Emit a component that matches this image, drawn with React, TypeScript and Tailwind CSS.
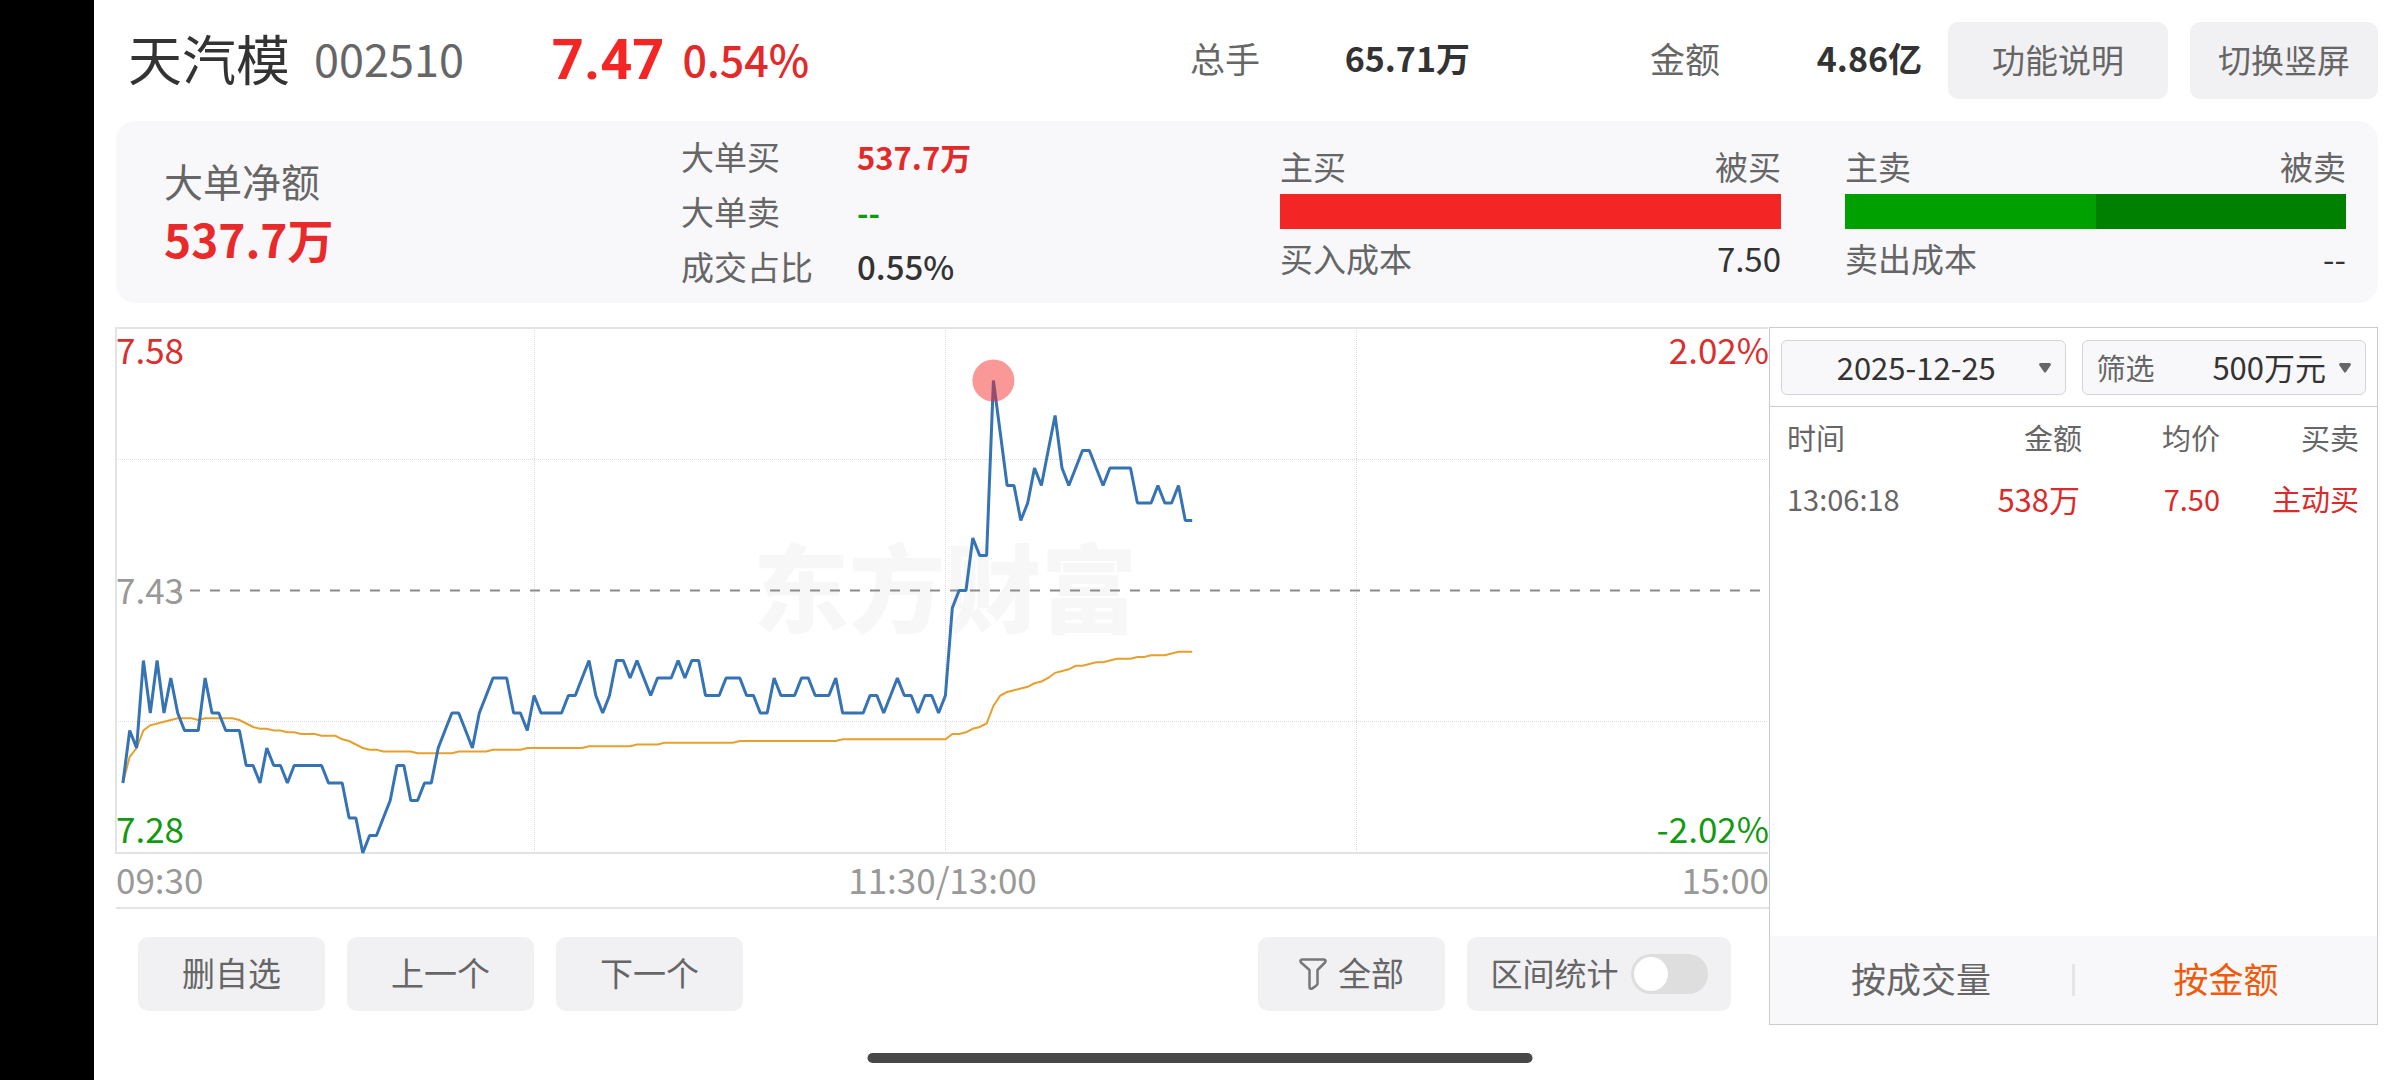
import { useState } from "react";
import clsx from "clsx";

// one value per minute, in cents above the 7.28 low
const prices = [
  4, 7, 6, 11, 8, 11, 8, 10, 8, 7, 7, 7, 10, 8, 8, 7, 7, 7, 5, 5, 4, 6, 5, 5, 4,
  5, 5, 5, 5, 5, 4, 4, 4, 2, 2, 0, 1, 1, 2, 3, 5, 5, 3, 3, 4, 4, 6, 7, 8, 8, 7,
  6, 8, 9, 10, 10, 10, 8, 8, 7, 9, 8, 8, 8, 8, 9, 9, 10, 11, 9, 8, 9, 11, 11,
  10, 11, 10, 9, 10, 10, 10, 11, 10, 11, 11, 9, 9, 9, 10, 10, 10, 9, 9, 8, 8,
  10, 9, 9, 9, 10, 10, 9, 9, 9, 10, 8, 8, 8, 8, 9, 9, 8, 9, 10, 9, 9, 8, 9, 9,
  8, 9, 14, 15, 15, 18, 17, 17, 27, 24, 21, 21, 19, 20, 22, 21, 23, 25, 22, 21,
  22, 23, 23, 22, 21, 22, 22, 22, 22, 20, 20, 20, 21, 20, 20, 21, 19, 19,
];

// [minute, cents above low], only where the slope changes
const average = [
  [0, 4], [1, 5.5], [2, 6], [3, 7], [4, 7.3], [6, 7.5], [8, 7.7], [10, 7.7],
  [11, 7.6], [12, 7.7], [16, 7.7], [17, 7.6], [18, 7.4], [19, 7.2], [20, 7.1],
  [21, 7.1], [22, 7], [23, 7], [24, 6.9], [25, 6.9], [26, 6.8], [28, 6.8],
  [29, 6.7], [31, 6.7], [32, 6.5], [33, 6.4], [34, 6.2], [35, 6], [36, 5.9],
  [37, 5.9], [38, 5.8], [42, 5.8], [43, 5.7], [48, 5.7], [49, 5.8], [53, 5.8],
  [54, 5.9], [58, 5.9], [59, 6], [67, 6], [68, 6.1], [74, 6.1], [75, 6.2],
  [78, 6.2], [79, 6.3], [89, 6.3], [90, 6.4], [104, 6.4], [105, 6.5],
  [120, 6.5], [121, 6.8], [122, 6.8], [123, 6.9], [124, 7.1], [125, 7.2],
  [126, 7.4], [127, 8.4], [128, 9], [129, 9.2], [131, 9.4], [132, 9.5],
  [133, 9.7], [134, 9.8], [135, 10], [136, 10.3], [138, 10.5], [139, 10.7],
  [140, 10.7], [142, 10.9], [143, 10.9], [145, 11.1], [147, 11.1], [148, 11.2],
  [149, 11.2], [150, 11.3], [152, 11.3], [154, 11.5], [156, 11.5],
];

const WIDTH = 1652;
const HEIGHT = 525;
const px = (minute: number) => ((minute + 1) * WIDTH) / 241;
const py = (cents: number) => 1 + HEIGHT - (cents * HEIGHT) / 30;
const toPoints = (list: number[][]) =>
  list.map(([m, c]) => `${px(m).toFixed(1)},${py(c).toFixed(1)}`).join(" ");

const Chart = () => (
  <svg viewBox="0 0 1652 527" className="block w-full h-auto overflow-visible">
    <text
      x="829"
      y="298"
      textAnchor="middle"
      fontSize="96"
      fontWeight="900"
      fill="#f7f7f7"
    >
      东方财富
    </text>
    <g stroke="#dcdcdc" strokeWidth="1" strokeDasharray="1 1">
      <path d="M0 132.5H1652M0 394.5H1652" />
      <path d="M418.5 1V526M829.5 1V526M1240.5 1V526" />
    </g>
    <path d="M1652 1H0V526H1652" fill="none" stroke="#e3e3e5" strokeWidth="2" />
    <path
      d="M62 263.5H1652"
      stroke="#8c8c8c"
      strokeWidth="2"
      strokeDasharray="10 10"
      strokeDashoffset="8"
    />
    <polyline
      points={toPoints(average)}
      fill="none"
      stroke="#e6a02d"
      strokeWidth="2"
    />
    <polyline
      points={toPoints(prices.map((c, m) => [m, c]))}
      fill="none"
      stroke="#3673b5"
      strokeWidth="3"
      strokeLinejoin="bevel"
    />
    <circle cx={px(127)} cy={py(27)} r="21" fill="#f42525" fillOpacity="0.48" />
  </svg>
);

const GrayButton = ({
  children,
  className,
}: {
  children: React.ReactNode;
  className?: string;
}) => (
  <button
    type="button"
    className={clsx(
      "flex items-center justify-center rounded-[10px] bg-[#f1f1f3] pb-1 text-[33px] leading-10 text-[#666]",
      className
    )}
  >
    {children}
  </button>
);

const CostBar = ({
  labels,
  colors,
  cost,
  value,
}: {
  labels: string[];
  colors: string[];
  cost: string;
  value: string;
}) => (
  <div className="w-[501px] text-[33px] leading-10 text-[#666]">
    <div className="flex justify-between">
      <span>{labels[0]}</span>
      <span>{labels[1]}</span>
    </div>
    <div className="mt-2 mb-[9px] flex h-[35px]">
      {colors.map((color, i) => (
        <div key={i} className={clsx("flex-1", color)} />
      ))}
    </div>
    <div className="flex justify-between">
      <span>{cost}</span>
      <span className="text-[#333]">{value}</span>
    </div>
  </div>
);

const Caret = () => (
  <svg viewBox="0 0 12 10" className="h-[10px] w-3 shrink-0" fill="#666">
    <path d="M1 0H11Q12.500 1 11.500 2.500L7 9Q6 10.500 5 9L.5 2.500Q-.5 1 1 0Z" />
  </svg>
);

const App = () => {
  const [range, setRange] = useState(false);
  const [tab, setTab] = useState("amount");

  return (
    <div className="relative flex min-h-screen bg-white font-['Noto_Sans_CJK_SC',sans-serif] text-[#333]">
      <div className="w-[94px] shrink-0 bg-black" />

      <main className="min-w-0 flex-1 px-[22px] pt-[22px]">
        <header className="flex h-[77px] items-start leading-[72px]">
          <h1 className="ml-3 text-[54px]">天汽模</h1>
          <span className="ml-6 text-[45px] text-[#666]">002510</span>
          <span className="ml-[88px] font-[Roboto,sans-serif] text-[56px] leading-[77px] font-bold text-[#f42525]">
            7.47
          </span>
          <span className="ml-[18px] text-[43px] font-medium text-[#e32a2a]">
            0.54%
          </span>
          <div className="ml-auto flex gap-[180px] text-[35px]">
            <div className="flex w-[280px] justify-between">
              <span className="text-[#666]">总手</span>
              <span className="text-[34px] font-bold">65.71万</span>
            </div>
            <div className="flex w-[272px] justify-between">
              <span className="text-[#666]">金额</span>
              <span className="text-[34px] font-bold">4.86亿</span>
            </div>
          </div>
          <GrayButton className="ml-[26px] h-[77px] w-[220px]">功能说明</GrayButton>
          <GrayButton className="ml-[22px] h-[77px] w-[188px]">切换竖屏</GrayButton>
        </header>

        <section className="mt-[22px] flex items-center rounded-[20px] bg-[#f8f8fb] pt-2 pr-8 pb-[9px] pl-12">
          <div className="w-[517px] pb-1">
            <div className="text-[39px] leading-[56px] text-[#666]">大单净额</div>
            <div className="text-[46px] leading-[60px] font-bold text-[#e92a2a]">
              537.7万
            </div>
          </div>
          <dl className="grid grid-cols-[176px_auto] text-[33px] leading-[55px] text-[#666]">
            <dt>大单买</dt>
            <dd className="text-[31px] font-bold text-[#e32a2a]">537.7万</dd>
            <dt>大单卖</dt>
            <dd className="text-[31px] font-bold text-[#0a9d0a]">--</dd>
            <dt>成交占比</dt>
            <dd className="text-[33px] font-medium text-[#333]">0.55%</dd>
          </dl>
          <div className="ml-auto flex gap-16">
            <CostBar
              labels={["主买", "被买"]}
              colors={["bg-[#f42525]"]}
              cost="买入成本"
              value="7.50"
            />
            <CostBar
              labels={["主卖", "被卖"]}
              colors={["bg-[#00a000]", "bg-[#008000]"]}
              cost="卖出成本"
              value="--"
            />
          </div>
        </section>

        <div className="mt-6 flex">
          <section className="min-w-0 flex-1 pb-[14px]">
            <div className="relative pr-px text-[35px] leading-10">
              <Chart />
              <span className="absolute top-0.5 left-0 text-[#d9302f]">7.58</span>
              <span className="absolute inset-y-0 left-0 flex items-center pb-1 text-[#999]">
                7.43
              </span>
              <span className="absolute bottom-1.5 left-0 text-[#129a12]">7.28</span>
              <span className="absolute top-0.5 right-0 text-[#d9302f]">2.02%</span>
              <span className="absolute right-0 bottom-1.5 text-[#129a12]">
                -2.02%
              </span>
            </div>
            <div className="grid grid-cols-3 border-b-2 border-[#e3e3e5] pb-[3px] text-[35px] leading-[50px] text-[#999]">
              <span>09:30</span>
              <span className="text-center">11:30/13:00</span>
              <span className="text-right">15:00</span>
            </div>

            <div className="mt-7 flex gap-[22px] pr-[38px] pl-[22px]">
              <GrayButton className="h-[74px] w-[187px]">删自选</GrayButton>
              <GrayButton className="h-[74px] w-[187px]">上一个</GrayButton>
              <GrayButton className="h-[74px] w-[187px]">下一个</GrayButton>
              <GrayButton className="ml-auto h-[74px] w-[187px] gap-[11px]">
                <svg
                  viewBox="0 0 28 32"
                  className="mt-1 h-8 w-7"
                  fill="none"
                  stroke="#777"
                  strokeWidth="2.5"
                  strokeLinejoin="round"
                >
                  <path d="M3 1.500H25Q27.500 2 26 4.500L18.500 12V26Q18 27.500 12.500 31Q10.500 31 10.500 29V12L2 4.500Q.5 2 3 1.500Z" />
                </svg>
                全部
              </GrayButton>
              <label className="flex h-[74px] w-[264px] items-center justify-center gap-3 rounded-[10px] bg-[#f1f1f3] text-[32px] leading-10 text-[#666]">
                <span className="pb-1">区间统计</span>
                <input
                  type="checkbox"
                  role="switch"
                  checked={range}
                  onChange={(e) => setRange(e.target.checked)}
                  className="flex h-10 w-[77px] appearance-none items-center rounded-full bg-[#dedede] px-[3px] before:size-[34px] before:rounded-full before:bg-white checked:justify-end checked:bg-[#f05a0a]"
                />
              </label>
            </div>
          </section>

          <aside className="flex w-[609px] shrink-0 flex-col border border-[#ccc]">
            <div className="grid grid-cols-2 gap-4 border-b border-[#ccc] px-[11px] pt-3 pb-[11px] text-[31px]">
              <div className="flex h-[55px] items-center rounded-md border border-[#d5d5d9] bg-[#f8f8fb] pr-[14px]">
                <select
                  aria-label="日期"
                  className="min-w-0 flex-1 appearance-none pb-0.5 pl-3 text-center leading-10"
                >
                  <option>2025-12-25</option>
                </select>
                <Caret />
              </div>
              <label className="flex h-[55px] items-center rounded-md border border-[#d5d5d9] bg-[#f8f8fb] pr-[14px] pl-[14px] leading-10">
                <span className="pb-0.5 text-[29px] text-[#666]">筛选</span>
                <select className="min-w-0 flex-1 appearance-none pr-[13px] pb-0.5 text-right leading-10 [text-align-last:right]">
                  <option>500万元</option>
                </select>
                <Caret />
              </label>
            </div>

            <table className="w-full table-fixed text-right text-[29px] leading-[61px]">
              <colgroup>
                <col className="w-[150px]" />
                <col className="w-[162px]" />
                <col className="w-[138px]" />
                <col />
              </colgroup>
              <thead className="text-[#666]">
                <tr>
                  <th className="pl-[17px] text-left font-normal">时间</th>
                  <th className="font-normal">金额</th>
                  <th className="font-normal">均价</th>
                  <th className="pr-[18px] font-normal">买卖</th>
                </tr>
              </thead>
              <tbody className="text-[#dc2a2a]">
                <tr>
                  <td className="pl-[17px] text-left text-[#666]">13:06:18</td>
                  <td className="pr-0.5 text-[31px]">538万</td>
                  <td>7.50</td>
                  <td className="pr-[18px]">主动买</td>
                </tr>
              </tbody>
            </table>

            <div className="mt-auto flex h-[88px] items-center bg-[#f8f8fb] text-[35px] leading-10">
              <button
                type="button"
                onClick={() => setTab("volume")}
                className={clsx(
                  "flex-1 pb-1",
                  tab === "volume" ? "text-[#f05a0a]" : "text-[#666]"
                )}
              >
                按成交量
              </button>
              <div className="h-8 w-[3px] bg-[#e5e5e8]" />
              <button
                type="button"
                onClick={() => setTab("amount")}
                className={clsx(
                  "flex-1 pb-1",
                  tab === "amount" ? "text-[#f05a0a]" : "text-[#666]"
                )}
              >
                按金额
              </button>
            </div>
          </aside>
        </div>
      </main>

      {/* system home indicator */}
      <div className="absolute bottom-[17px] left-1/2 h-[10px] w-[665px] -translate-x-1/2 rounded-full bg-[#484848]" />
    </div>
  );
};

export default App;
